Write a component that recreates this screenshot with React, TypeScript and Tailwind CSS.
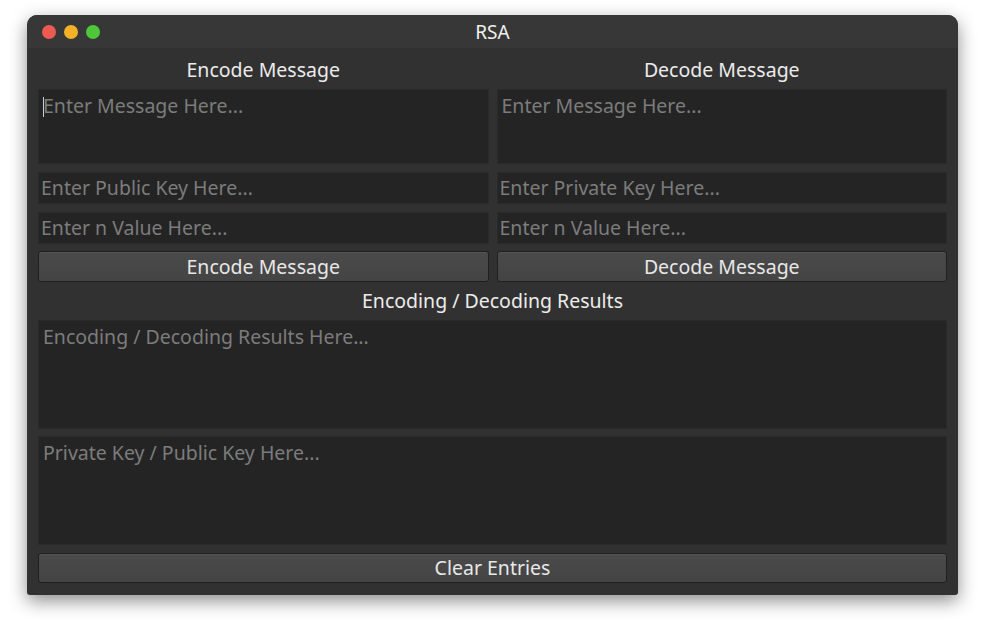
import React from 'react';

const font = { fontFamily: '"Noto Sans", "Open Sans", sans-serif' };

function Field({ text, tall, caret }: { text: string; tall?: string; caret?: boolean }) {
  if (tall) {
    return (
      <div className={`${tall} bg-[#242424] border border-[#2a2a2a] px-[4px] pt-[4px] text-[19.5px] leading-[24px] text-[#7c7c7c] whitespace-nowrap overflow-hidden`}>
        {caret && <span className="inline-block w-px h-[20px] bg-[#cfcfcf] align-[-4px] -mr-px" />}
        {text}
      </div>
    );
  }
  return (
    <div className="h-[32px] bg-[#242424] border border-[#2a2a2a] px-[2px] flex items-center text-[19.5px] text-[#7c7c7c] whitespace-nowrap overflow-hidden">
      {text}
    </div>
  );
}

function Button({ label, h = 'h-[31px]' }: { label: string; h?: string }) {
  return (
    <div className={`${h} rounded-[3px] border border-[#1f1f1f] bg-gradient-to-b from-[#4a4a4a] to-[#444444] shadow-[inset_0_1px_0_rgba(255,255,255,0.06)] flex items-center justify-center text-[19.5px] text-[#e8e8e8]`}>
      {label}
    </div>
  );
}

function Column({ title, keyText }: { title: string; keyText: string }) {
  return (
    <div className="flex-1 flex flex-col">
      <div className="h-[41px] flex items-center justify-center pt-[2px] text-[19.5px] text-[#ececec]">{title}</div>
      <Field text="Enter Message Here..." tall="h-[75px]" caret={title === 'Encode Message'} />
      <div className="h-[8px]" />
      <Field text={keyText} />
      <div className="h-[8px]" />
      <Field text="Enter n Value Here..." />
      <div className="h-[7px]" />
      <Button label={title} />
    </div>
  );
}

export default function App() {
  return (
    <div className="min-h-[635px] bg-white pt-[15px] pl-[27px]" style={font}>
      <div className="w-[931px] h-[580px] rounded-t-[10px] rounded-b-[3px] overflow-hidden bg-[#313131] shadow-[0_6px_18px_rgba(0,0,0,0.45)] flex flex-col">
        {/* title bar */}
        <div className="h-[33px] bg-[#373737] relative flex items-center justify-center pt-[2px]">
          <div className="absolute left-[15px] top-[10px] flex gap-[8px]">
            <span className="w-[14px] h-[14px] rounded-full bg-[#ec5a52]" />
            <span className="w-[14px] h-[14px] rounded-full bg-[#f2b126]" />
            <span className="w-[14px] h-[14px] rounded-full bg-[#4fc73a]" />
          </div>
          <span className="text-[19px] text-[#f0f0f0]">RSA</span>
        </div>

        <div className="flex-1 px-[11px] flex flex-col">
          <div className="flex gap-[8px]">
            <Column title="Encode Message" keyText="Enter Public Key Here..." />
            <Column title="Decode Message" keyText="Enter Private Key Here..." />
          </div>
          <div className="h-[38px] flex items-center justify-center text-[19.5px] text-[#ececec]">
            Encoding / Decoding Results
          </div>
          <Field text="Encoding / Decoding Results Here..." tall="h-[109px]" />
          <div className="h-[7px]" />
          <Field text="Private Key / Public Key Here..." tall="h-[109px]" />
          <div className="h-[8px]" />
          <Button label="Clear Entries" h="h-[30px]" />
        </div>
      </div>
    </div>
  );
}
